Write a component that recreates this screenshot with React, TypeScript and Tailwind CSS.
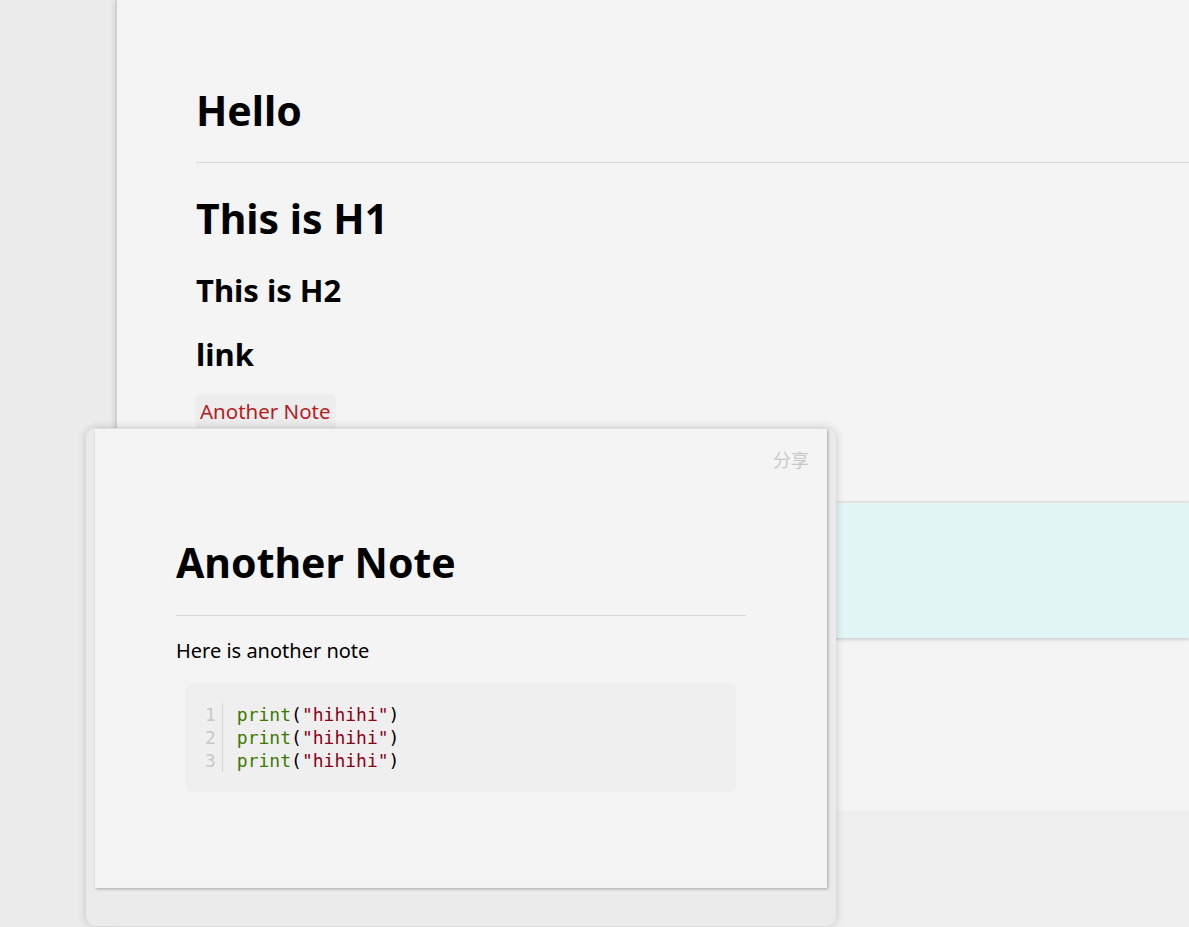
import React from 'react';

const codeLines = ['print("hihihi")', 'print("hihihi")', 'print("hihihi")'];

function CodeLine({ text }: { text: string }) {
  // naive split: fn name, parens, string literal
  const m = text.match(/^(\w+)\((".*")\)$/);
  if (!m) return <span>{text}</span>;
  return (
    <span>
      <span className="text-[#3b7a00]">{m[1]}</span>
      <span className="text-black">(</span>
      <span className="text-[#8b0016]">{m[2]}</span>
      <span className="text-black">)</span>
    </span>
  );
}

function NotePopup() {
  return (
    <div className="absolute left-[86px] top-[428px] w-[750px] h-[498px] rounded-[10px] bg-[#ebebeb] shadow-[0_0_10px_rgba(0,0,0,0.18)]">
      <div className="ml-[9px] mt-[1px] w-[732px] h-[459px] bg-[#f4f4f4] shadow-[1px_1px_3px_rgba(0,0,0,0.3)] flex flex-col">
        <div className="flex justify-end pr-[18px] pt-[18px]">
          <span className="text-[18px] leading-[24px] text-[#c8c8c8] font-['Noto_Sans_CJK_SC',sans-serif]">分享</span>
        </div>
        <div className="px-[81px] pt-[66px]">
          <h1 className="text-[41px] leading-[50px] font-bold text-black pb-[28px] border-b border-[#d8d8d8]">Another Note</h1>
          <p className="mt-[21px] text-[20px] leading-[28px] text-black">Here is another note</p>
          <div className="mx-[10px] mt-[18px] h-[109px] rounded-[6px] bg-[#efefef] pt-[20px] pl-[19px] flex items-start font-['DejaVu_Sans_Mono',monospace] text-[18px] leading-[23px]">
            <div className="flex flex-col text-[#c8c8c8] pr-[6px] border-r border-[#d6d6d6] text-right">
              {codeLines.map((_, i) => (
                <span key={i}>{i + 1}</span>
              ))}
            </div>
            <div className="flex flex-col pl-[14px]">
              {codeLines.map((l, i) => (
                <CodeLine key={i} text={l} />
              ))}
            </div>
          </div>
        </div>
      </div>
    </div>
  );
}

export default function App() {
  return (
    <div className="relative w-full h-[927px] overflow-hidden bg-[#ececec] font-['Noto_Sans',sans-serif]">
      {/* Page */}
      <div className="ml-[115px] h-[810px] bg-[#f4f4f4] border-l-2 border-[#d2d2d2] shadow-[-2px_0_4px_rgba(0,0,0,0.08)]">
        <div className="pl-[79px] pt-[83px]">
          <h1 className="text-[41px] leading-[54px] font-bold text-black pb-[25px] border-b border-[#d8d8d8]">Hello</h1>
          <h1 className="mt-[28px] text-[41px] leading-[54px] font-bold text-black">This is H1</h1>
          <h2 className="mt-[24px] text-[31px] leading-[42px] font-bold text-black">This is H2</h2>
          <h3 className="mt-[22px] text-[31px] leading-[42px] font-bold text-black">link</h3>
          <div className="mt-[19px]">
            <span className="inline-block rounded-[5px] bg-[#ededed] px-[4px] py-[2px] text-[20.5px] leading-[30px] text-[#b71c1c] shadow-[0_1px_2px_rgba(0,0,0,0.08)]">
              Another Note
            </span>
          </div>
        </div>
        <div className="mt-[73px] h-[137px] bg-[#e2f6f5] border-t-2 border-[#e4e4e4] shadow-[0_2px_3px_rgba(0,0,0,0.15)]" />
      </div>
      <div className="h-[117px] ml-[115px] bg-[#efefef]" />
      <NotePopup />
    </div>
  );
}
